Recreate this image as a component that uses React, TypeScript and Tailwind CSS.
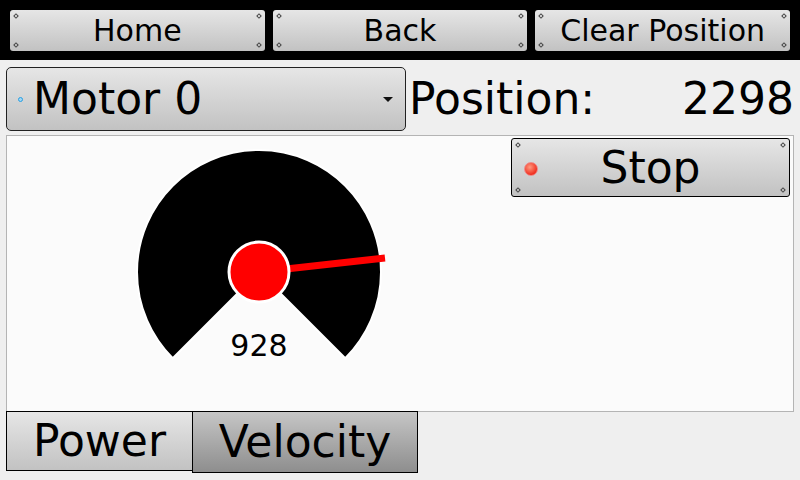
import React from 'react';

const Dots: React.FC = () => (
  <>
    <span className="absolute top-[4px] left-[4px] w-[4px] h-[4px] rotate-45 border border-[#444]" />
    <span className="absolute top-[4px] right-[4px] w-[4px] h-[4px] rotate-45 border border-[#444]" />
    <span className="absolute bottom-[4px] left-[4px] w-[4px] h-[4px] rotate-45 border border-[#444]" />
    <span className="absolute bottom-[4px] right-[4px] w-[4px] h-[4px] rotate-45 border border-[#444]" />
  </>
);

const TopButton: React.FC<{ label: string }> = ({ label }) => (
  <button className="relative h-[41px] rounded-[3px] bg-gradient-to-b from-[#e6e6e6] to-[#c2c2c2] text-[30px] leading-none text-black pt-[1px]">
    <Dots />
    {label}
  </button>
);

const Gauge: React.FC<{ value: number }> = ({ value }) => {
  const cx = 130;
  const cy = 130;
  const r = 122;
  const d = r * Math.SQRT1_2;
  return (
    <svg width="260" height="230" viewBox="0 0 260 230" className="ml-[122px] mt-[6px] shrink-0">
      <path
        d={`M${cx},${cy} L${cx - d},${cy + d} A${r},${r} 0 1 1 ${cx + d},${cy + d} Z`}
        fill="#000"
        stroke="#fff"
        strokeWidth="2"
      />
      <line x1={cx} y1={cy} x2="256" y2="116" stroke="#ff0000" strokeWidth="7" />
      <circle cx={cx} cy={cy} r="30" fill="#ff0000" stroke="#fff" strokeWidth="3" />
      <text x={cx} y="214" textAnchor="middle" fontSize="30" fontFamily="DejaVu Sans, sans-serif" fill="#000">
        {value}
      </text>
    </svg>
  );
};

export default function App() {
  return (
    <div className="w-[800px] h-[480px] bg-[#efefef] flex flex-col overflow-hidden text-black font-['DejaVu_Sans',sans-serif]">
      <div className="h-[60px] shrink-0 bg-black grid grid-cols-3 gap-[8px] px-[10px] pt-[10px]">
        <TopButton label="Home" />
        <TopButton label="Back" />
        <TopButton label="Clear Position" />
      </div>

      <div className="flex items-center h-[64px] mt-[7px] pl-[6px] pr-[6px] shrink-0">
        <div className="relative w-[400px] h-[64px] shrink-0 rounded-[5px] border border-[#222] bg-gradient-to-b from-[#e6e6e6] to-[#c2c2c2] flex items-center">
          <span className="ml-[11px] w-[5px] h-[5px] rounded-full border border-[#2a9fe0] bg-[#9fd6f5]" />
          <span className="ml-[10px] text-[44px] leading-none">Motor 0</span>
          <span className="ml-auto mr-[12px] w-0 h-0 border-l-[5px] border-r-[5px] border-t-[5px] border-l-transparent border-r-transparent border-t-[#111]" />
        </div>
        <div className="flex-1 flex justify-between items-center pl-[3px] text-[44px] leading-none">
          <span>Position:</span>
          <span>2298</span>
        </div>
      </div>

      <div className="mx-[6px] mt-[4px] h-[277px] shrink-0 border border-[#b4b4b4] bg-[#fbfbfb] flex justify-between items-start">
        <Gauge value={928} />
        <button className="relative mt-[2px] mr-[3px] w-[279px] h-[59px] rounded-[3px] border border-black bg-gradient-to-b from-[#e6e6e6] to-[#c2c2c2] flex items-center">
          <Dots />
          <span className="absolute left-[12px] top-[23px] w-[14px] h-[14px] rounded-full border border-[#e88] bg-[radial-gradient(circle_at_40%_35%,#ff9a80,#f03020_70%)]" />
          <span className="w-full text-center text-[44px] leading-none">Stop</span>
        </button>
      </div>

      <div className="flex items-start pl-[6px] -mt-[1px]">
        <button className="w-[187px] h-[60px] border border-black bg-gradient-to-b from-[#e6e6e6] to-[#c2c2c2] text-[44px] leading-none">
          Power
        </button>
        <button className="w-[226px] h-[62px] border border-black -ml-[1px] bg-gradient-to-b from-[#c6c6c6] to-[#8e8e8e] text-[44px] leading-none">
          Velocity
        </button>
      </div>
    </div>
  );
}
